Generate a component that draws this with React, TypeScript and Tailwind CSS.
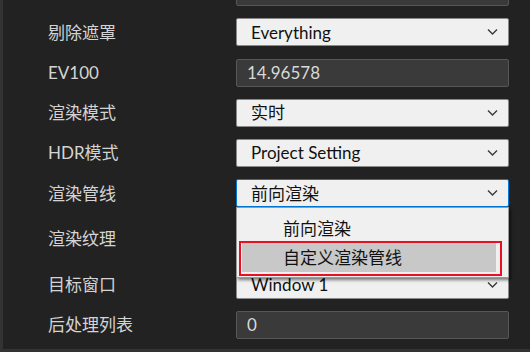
import React from 'react';

const font = { fontFamily: '"Lato", "Noto Sans CJK SC", sans-serif' };

const Chevron = () => (
  <svg className="absolute right-[10px] top-1/2 -translate-y-1/2" width="11" height="7" viewBox="0 0 11 7">
    <polyline points="1,1 5.5,5.5 10,1" fill="none" stroke="#3a3a3a" strokeWidth="1.4" />
  </svg>
);

const Combo = ({ value, active = false }: { value: string; active?: boolean }) => (
  <div
    className={`relative h-[28px] flex items-center pl-[14px] bg-[#f0f0f0] text-[#111] rounded-[2px] border ${
      active ? 'border-[#0078d7]' : 'border-[#8a8a8a]'
    }`}
  >
    <span>{value}</span>
    <Chevron />
  </div>
);

const TextField = ({ value, h = 'h-[28px]' }: { value: string; h?: string }) => (
  <div className={`${h} flex items-center pl-[10px] bg-[#3a3a3a] border border-[#575757] rounded-[2px] text-[#d8d8d8]`}>
    {value}
  </div>
);

const Row = ({ label, children }: { label: string; children: React.ReactNode }) => (
  <div className="flex items-center">
    <div className="w-[233px] pl-[45px] text-[#d4d4d4]">{label}</div>
    <div className="w-[273px]">{children}</div>
  </div>
);

export default function App() {
  return (
    <div
      className="relative w-[530px] h-[352px] overflow-hidden bg-[#222222] border-l-[3px] border-b-[3px] border-[#333333] text-[17px]"
      style={font}
    >
      <div className="flex flex-col gap-[12.25px] mt-[-22px]">
        <Row label="">
          <TextField value="" />
        </Row>
        <Row label="剔除遮罩">
          <Combo value="Everything" />
        </Row>
        <Row label="EV100">
          <TextField value="14.96578" />
        </Row>
        <Row label="渲染模式">
          <Combo value="实时" />
        </Row>
        <Row label="HDR模式">
          <Combo value="Project Setting" />
        </Row>
        <Row label="渲染管线">
          <div className="relative">
            <Combo value="前向渲染" active />
            <div className="absolute left-0 top-[28px] z-10 w-[273px] h-[71px] bg-[#f0f0f0] border border-[#9a9a9a] shadow-[2px_2px_3px_rgba(0,0,0,0.5)] pt-[6px] pl-[5px] pr-[12px] text-[#111]">
              <div className="h-[29px] flex items-center pl-[41px]">前向渲染</div>
              <div className="h-[29px] flex items-center pl-[41px] bg-[#c8c8c8]">自定义渲染管线</div>
            </div>
            <div className="absolute left-[3px] top-[62px] z-20 w-[263px] h-[35px] border-2 border-[#e81123]" />
          </div>
        </Row>
        <Row label="渲染纹理">
          <TextField value="" h="h-[39px]" />
        </Row>
        <Row label="目标窗口">
          <Combo value="Window 1" />
        </Row>
        <Row label="后处理列表">
          <TextField value="0" />
        </Row>
      </div>
    </div>
  );
}
